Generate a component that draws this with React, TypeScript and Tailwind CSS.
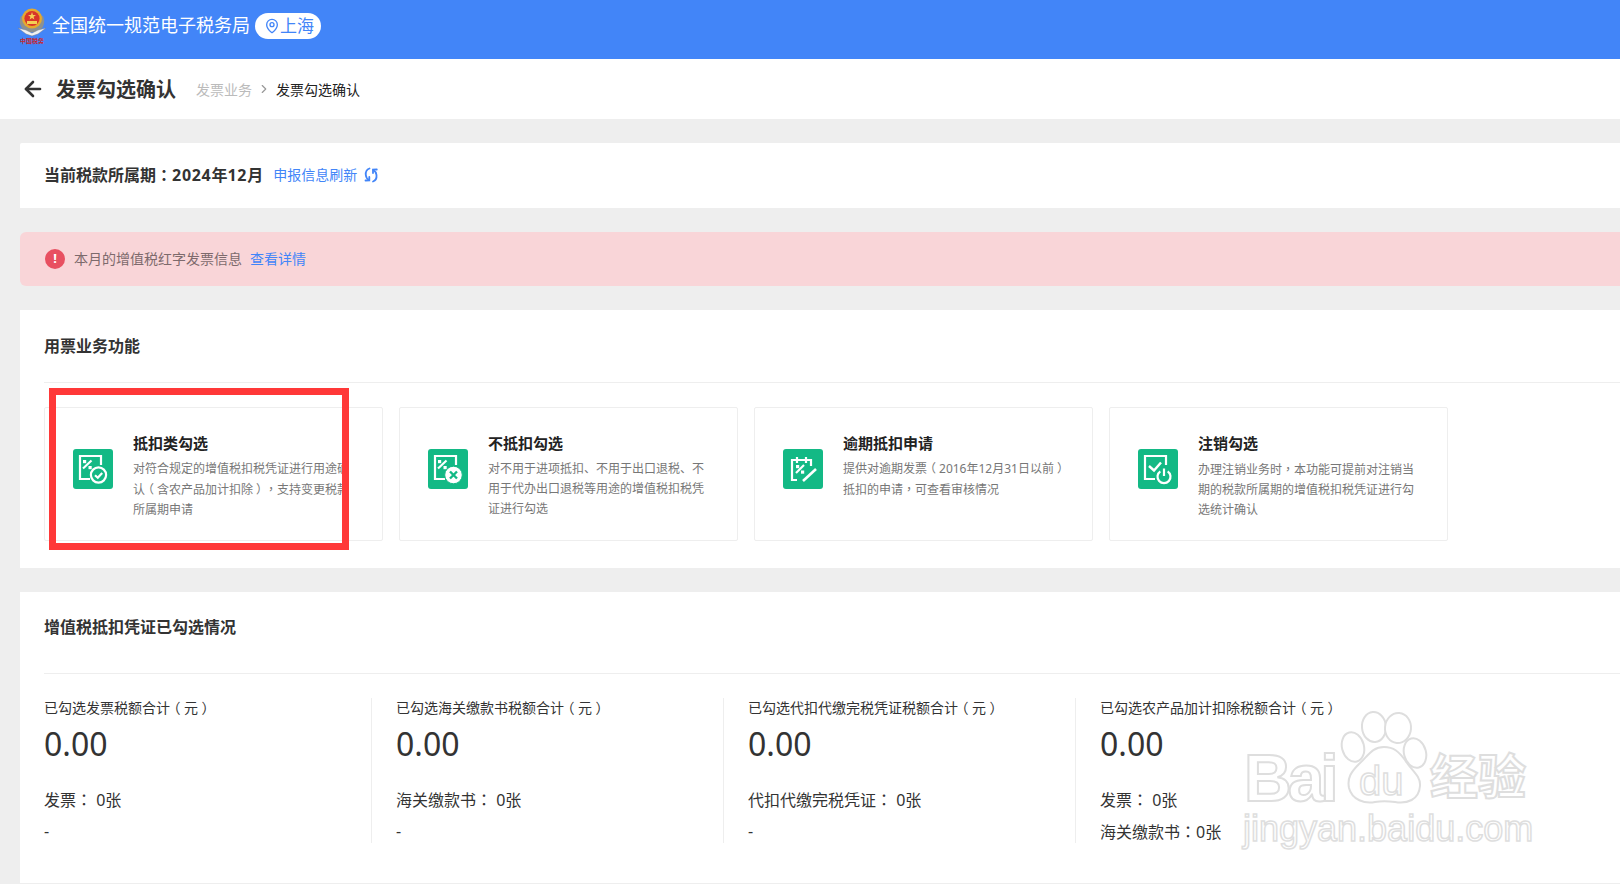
import { ArrowLeft, ChevronRight, MapPin } from 'lucide-react'
import React from 'react'

// fullwidth punctuation sits centred in its box in the screenshot
const Cjk = ({ text }: { text: string }) => (
  <>
    {text.split(/([（），：])/).map((part, i) => {
      if (part === '（' || part === '）') {
        return <span key={i} className="px-[0.25em] [font-feature-settings:'halt']">{part}</span>
      }
      if (part === '，' || part === '：') {
        return <span key={i} className="font-['Noto_Sans_CJK_TC',sans-serif]">{part}</span>
      }
      return part
    })}
  </>
)

const TaxLogo = () => (
  <div className="flex flex-col items-center w-[30px] shrink-0">
    <svg width="30" height="30" viewBox="0 0 30 30">
      <path d="M4 9 A12.5 12.5 0 0 0 9 25 L21 25 A12.5 12.5 0 0 0 26 9 Z" fill="#8d9190" />
      <circle cx="15" cy="11.5" r="10" fill="#e6a92e" />
      <circle cx="15" cy="11.5" r="7.6" fill="#d8352a" />
      <path d="M15 5 L16 8 L19 8 L16.6 9.8 L17.4 12.6 L15 11 L12.6 12.6 L13.4 9.8 L11 8 L14 8 Z" fill="#f4cf55" />
      <path d="M10 14 h10 v3 h-10 Z" fill="#f4cf55" />
      <path d="M1 21 L9 23 L15 26 L21 23 L29 21 L21 27 L15 29 L9 27 Z" fill="#f1f1f1" stroke="#6f7b90" strokeWidth="0.5" />
    </svg>
    <span className="text-[6px] leading-[8px] font-bold text-[#c8262c] whitespace-nowrap">中国税务</span>
  </div>
)

const RefreshIcon = () => (
  <svg width="16" height="16" viewBox="0 0 16 16" fill="none" stroke="#4285f8" strokeWidth="1.8" strokeLinecap="round">
    <path d="M6.5 1.5 C3.5 2.5 2.5 5 2.8 8 C3 10.5 4.2 12 6 13" />
    <path d="M2.5 13.5 L6.3 13.3 L6.3 10" />
    <path d="M10 14.5 C12.8 13.5 13.8 11 13.5 8 C13.2 5.5 12 4 10.3 3" />
    <path d="M13.8 2.5 L10 2.7 L10 6" />
  </svg>
)

const GreenIcon = ({ children }: { children: React.ReactNode }) => (
  <svg width="40" height="40" viewBox="0 0 40 40" className="shrink-0 mt-[41px]">
    <rect width="40" height="40" rx="3" fill="#13b985" />
    {children}
  </svg>
)

const PercentMark = () => (
  <g>
    <path d="M10 19.5 L18.5 11.5" stroke="#fff" strokeWidth="2.2" />
    <rect x="10" y="11" width="3.2" height="3.2" fill="#fff" />
    <rect x="15.5" y="17" width="3.2" height="3.2" fill="#fff" />
  </g>
)

const FrameLine = () => (
  <path d="M17 30 H7 V7 H28 V16" fill="none" stroke="#fff" strokeWidth="2.2" />
)

const cards = [
  {
    title: '抵扣类勾选',
    desc: ['对符合规定的增值税扣税凭证进行用途确', '认（含农产品加计扣除），支持变更税款', '所属期申请'],
    icon: (
      <GreenIcon>
        <FrameLine />
        <PercentMark />
        <circle cx="25.5" cy="26" r="7.6" fill="#13b985" stroke="#fff" strokeWidth="2.2" />
        <path d="M22 26.2 L24.8 28.8 L29.2 24" fill="none" stroke="#fff" strokeWidth="2.2" />
      </GreenIcon>
    ),
  },
  {
    title: '不抵扣勾选',
    desc: ['对不用于进项抵扣、不用于出口退税、不', '用于代办出口退税等用途的增值税扣税凭', '证进行勾选'],
    icon: (
      <GreenIcon>
        <FrameLine />
        <PercentMark />
        <circle cx="25.5" cy="26" r="8.8" fill="#fff" stroke="#13b985" strokeWidth="1" />
        <path d="M22 22.5 L29 29.5 M29 22.5 L22 29.5" stroke="#13b985" strokeWidth="2.4" />
      </GreenIcon>
    ),
  },
  {
    title: '逾期抵扣申请',
    desc: ['提供对逾期发票（2016年12月31日以前）', '抵扣的申请，可查看审核情况'],
    icon: (
      <GreenIcon>
        <path d="M14 31 H9 V11 H28 V17" fill="none" stroke="#fff" strokeWidth="2.2" />
        <path d="M14 8 V14 M23 8 V14" stroke="#fff" strokeWidth="2.2" />
        <path d="M13 24 L21 16" stroke="#fff" strokeWidth="2.2" />
        <rect x="13" y="16" width="3.2" height="3.2" fill="#fff" />
        <rect x="18" y="21.5" width="3.2" height="3.2" fill="#fff" />
        <path d="M20 32 L33 20" stroke="#fff" strokeWidth="2.6" />
      </GreenIcon>
    ),
  },
  {
    title: '注销勾选',
    desc: ['办理注销业务时，本功能可提前对注销当', '期的税款所属期的增值税扣税凭证进行勾', '选统计确认'],
    icon: (
      <GreenIcon>
        <FrameLine />
        <path d="M11 17 L16 21.5 L23 13.5" fill="none" stroke="#fff" strokeWidth="2.4" />
        <circle cx="26" cy="27" r="9" fill="#13b985" />
        <path d="M22.3 22.3 A6.5 6.5 0 1 0 29.7 22.3" fill="none" stroke="#fff" strokeWidth="2.2" />
        <path d="M26 19.5 V27" stroke="#fff" strokeWidth="2.2" />
      </GreenIcon>
    ),
  },
]

const stats = [
  { label: '已勾选发票税额合计（元）', rows: ['发票： 0张', '-'] },
  { label: '已勾选海关缴款书税额合计（元）', rows: ['海关缴款书： 0张', '-'] },
  { label: '已勾选代扣代缴完税凭证税额合计（元）', rows: ['代扣代缴完税凭证： 0张', '-'] },
  { label: '已勾选农产品加计扣除税额合计（元）', rows: ['发票： 0张', '海关缴款书：0张'] },
]

const Watermark = () => (
  <div className="absolute left-[1236px] top-[708px] w-[300px] h-[144px] pointer-events-none">
    <svg width="120" height="104" viewBox="0 0 120 104" className="absolute left-[76px] top-0" fill="#fff" stroke="#dedede" strokeWidth="2">
      <ellipse cx="41" cy="39" rx="11" ry="15" transform="rotate(-15 41 39)" />
      <ellipse cx="62" cy="19" rx="12" ry="15" transform="rotate(-5 62 19)" />
      <ellipse cx="86" cy="20" rx="13" ry="15" transform="rotate(5 86 20)" />
      <ellipse cx="103" cy="45" rx="11" ry="15" transform="rotate(-15 103 45)" />
      <path d="M72 39 C60 39 56 48 47 56 C39 64 35 70 37 80 C40 92 53 96 63 94 C69 93 75 93 83 94 C95 96 107 92 108 78 C109 68 99 62 93 52 C87 44 82 39 72 39 Z" />
    </svg>
    <span className="absolute left-[8px] top-[33px] text-[66px] leading-[75px] font-bold tracking-[-4px] text-white [-webkit-text-stroke:2px_#dedede] font-['Liberation_Sans',sans-serif]">Bai</span>
    <span className="absolute left-[123px] top-[52px] text-[40px] leading-[42px] text-white [-webkit-text-stroke:1.5px_#dedede] font-['Liberation_Sans',sans-serif]">du</span>
    <span className="absolute left-[194px] top-[38px] text-[48px] leading-[60px] whitespace-nowrap text-white [-webkit-text-stroke:2px_#dedede] font-bold">经验</span>
    <span className="absolute left-[7px] top-[100px] text-[36px] leading-[42px] whitespace-nowrap text-white [-webkit-text-stroke:1.5px_#dedede] font-['Liberation_Sans',sans-serif]">jingyan.baidu.com</span>
  </div>
)

export default function App() {
  return (
    <div className="relative h-[884px] overflow-hidden bg-[#eeeeee] text-[#333333] [text-spacing-trim:space-all] font-['Noto_Sans','Noto_Sans_CJK_SC',sans-serif]">
      <header className="flex items-center h-[59px] bg-[#4285f8] pl-[17px] pb-[8px]">
        <TaxLogo />
        <span className="ml-[5px] text-[18px] text-white">全国统一规范电子税务局</span>
        <span className="ml-[5px] flex items-center h-[26px] pl-[9px] pr-[7px] rounded-full bg-white text-[17px] text-[#4285f8]">
          <MapPin size={16} strokeWidth={2} />
          <span>上海</span>
        </span>
      </header>

      <div className="flex items-center h-[60px] bg-white pl-[21px]">
        <ArrowLeft size={24} strokeWidth={2.6} className="text-[#333333]" />
        <h1 className="ml-[11px] pt-[2px] text-[20px] font-bold">发票勾选确认</h1>
        <span className="ml-[20px] text-[14px] text-[#bbbbbb]">发票业务</span>
        <ChevronRight size={14} className="mx-[5px] text-[#999999]" />
        <span className="text-[14px] text-[#222222]">发票勾选确认</span>
      </div>

      <div className="flex flex-col gap-[24px] pl-[20px] pt-[24px]">
        <section className="flex items-center h-[65px] bg-white pl-[24px] pb-[2px] rounded-tl-[2px]">
          <span className="text-[16px] font-bold">
            <Cjk text="当前税款所属期：" /><span className="tracking-[0.7px]">2024</span>年<span className="tracking-[0.7px]">12</span>月
          </span>
          <span className="ml-[10px] text-[14px] text-[#4285f8]">申报信息刷新</span>
          <span className="ml-[6px]"><RefreshIcon /></span>
        </section>

        <div className="flex items-center h-[54px] bg-[#f9d5d8] pl-[25px] rounded-l-[6px]">
          <span className="flex items-center justify-center w-[20px] h-[20px] rounded-full bg-[#e85061] text-white text-[13px] font-bold">!</span>
          <span className="ml-[9px] pb-[2px] text-[14px] text-[#7d6a6c]">本月的增值税红字发票信息</span>
          <span className="ml-[8px] pb-[2px] text-[14px] text-[#4285f8]">查看详情</span>
        </div>

        <section className="bg-white h-[258px]">
          <div className="flex items-center h-[73px] ml-[24px] border-b border-[#eeeeee]">
            <h2 className="text-[16px] font-bold">用票业务功能</h2>
          </div>
          <div className="flex gap-[16px] pl-[24px] pt-[24px]">
            {cards.map(card => (
              <div key={card.title} className="flex items-start w-[339px] h-[134px] border border-[#eeeeee] rounded-[2px] pl-[28px]">
                {card.icon}
                <div className="ml-[20px] w-[224px] pt-[24px]">
                  <p className="text-[15px] leading-[22px] font-bold text-[#222222]">{card.title}</p>
                  <div className="mt-[5px] text-[12px] leading-[20px] text-[#777777] whitespace-nowrap">
                    {card.desc.map(line => <p key={line}><Cjk text={line} /></p>)}
                  </div>
                </div>
              </div>
            ))}
          </div>
        </section>

        <section className="bg-white h-[292px]">
          <div className="flex items-center h-[82px] ml-[24px] border-b border-[#eeeeee] pb-[12px]">
            <h2 className="text-[16px] font-bold">增值税抵扣凭证已勾选情况</h2>
          </div>
          <div className="flex pl-[24px] pt-[24px]">
            {stats.map((stat, i) => (
              <div key={stat.label} className={i < 3 ? 'w-[328px] h-[145px] mr-[24px] border-r border-[#eeeeee]' : 'w-[328px] h-[145px]'}>
                <p className="-mt-[1px] text-[14px] leading-[22px]"><Cjk text={stat.label} /></p>
                <p className="mt-[5px] text-[32px] leading-[40px]">0.00</p>
                <p className="mt-[23px] text-[16px] leading-[24px] whitespace-pre"><Cjk text={stat.rows[0]} /></p>
                <p className="mt-[7px] text-[16px] leading-[24px]"><Cjk text={stat.rows[1]} /></p>
              </div>
            ))}
          </div>
          <div className="mt-[40px] border-b border-[#eeeeee]" />
        </section>
      </div>

      {/* red marker drawn on top of the screenshot */}
      <div className="absolute left-[49px] top-[388px] w-[300px] h-[162px] border-[7px] border-[#ff3838] pointer-events-none" />
      <Watermark />
    </div>
  )
}
